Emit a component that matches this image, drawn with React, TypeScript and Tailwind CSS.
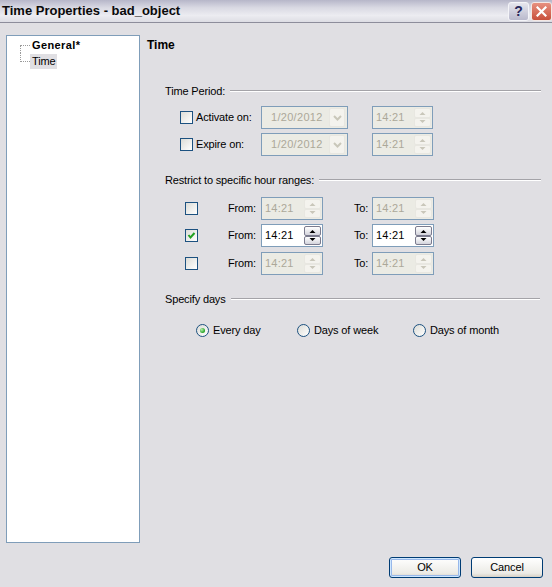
import React from "react";

function Checkbox({ checked }: { checked?: boolean }) {
  return (
    <span className="w-[13px] h-[13px] border border-[#1c5180] bg-[linear-gradient(135deg,#dcdcd7,#ffffff)] flex items-center justify-center shrink-0">
      {checked && (
        <svg width="11" height="11" viewBox="0 0 11 11">
          <path d="M2.5 5 L4.5 7.5 L8.5 3" stroke="#21a121" strokeWidth="2" fill="none" />
        </svg>
      )}
    </span>
  );
}

function Radio({ checked }: { checked?: boolean }) {
  return (
    <span className="w-[13px] h-[13px] rounded-full border border-[#1c5180] bg-[linear-gradient(135deg,#dcdcd7,#ffffff)] flex items-center justify-center shrink-0">
      {checked && (
        <span className="w-[5px] h-[5px] rounded-full bg-[radial-gradient(circle_at_35%_35%,#b8f0b0,#21a121_70%)]" />
      )}
    </span>
  );
}

function Arrow({ up, color }: { up?: boolean; color: string }) {
  return (
    <svg width="7" height="4" viewBox="0 0 7 4">
      {up ? <path d="M0.5 4 L3.5 1 L6.5 4 Z" fill={color} /> : <path d="M0.5 0 L3.5 3 L6.5 0 Z" fill={color} />}
    </svg>
  );
}

function SpinBtn({ up, enabled }: { up?: boolean; enabled?: boolean }) {
  return (
    <div
      className={
        enabled
          ? "flex-1 rounded-[2px] border border-[#7b7b8e] bg-[linear-gradient(to_bottom,#ffffff,#d4d4dc)] flex items-center justify-center"
          : "flex-1 rounded-[2px] border border-[#e8e7e1] bg-[#f4f3ee] flex items-center justify-center"
      }
    >
      <Arrow up={up} color={enabled ? "#000000" : "#c9c7ba"} />
    </div>
  );
}

function Spinner({ enabled, wide }: { enabled?: boolean; wide?: boolean }) {
  return (
    <div
      className={
        (wide ? "w-[62px] " : "w-[61px] ") +
        (enabled
          ? "h-[23px] border border-[#7f9db9] bg-white flex shrink-0"
          : "h-[23px] border border-[#7f9db9] bg-[#ebebe4] flex shrink-0")
      }
    >
      <span
        className={
          enabled
            ? "flex-1 pl-[3px] flex items-center text-black tracking-[0.2px]"
            : "flex-1 pl-[3px] flex items-center text-[#aca899] tracking-[0.2px]"
        }
      >
        14:21
      </span>
      <div className="w-[18px] flex flex-col py-[1px] pr-[1px]">
        <SpinBtn up enabled={enabled} />
        <SpinBtn enabled={enabled} />
      </div>
    </div>
  );
}

function DateBox() {
  return (
    <div className="w-[87px] h-[23px] border border-[#7f9db9] bg-[#ebebe4] flex items-center shrink-0">
      <span className="flex-1 pl-[9px] text-[#aca899] tracking-[0.3px]">1/20/2012</span>
      <div className="w-[16px] h-[19px] mr-[2px] rounded-[2px] border border-[#e8e7e1] bg-[#f4f3ee] flex items-center justify-center">
        <svg width="9" height="6" viewBox="0 0 9 6">
          <path d="M1 1 L4.5 4.5 L8 1" stroke="#c9c7ba" strokeWidth="2" fill="none" />
        </svg>
      </div>
    </div>
  );
}

function GroupHeader({ label }: { label: string }) {
  return (
    <div className="flex items-center h-[14px] pl-[18px]">
      <span className="whitespace-nowrap">{label}</span>
      <div className="flex-1 ml-[5px] h-[2px] border-t border-t-[#a4a3a8] border-b border-b-[#ffffff]" />
    </div>
  );
}

function PeriodRow({ label, mt }: { label: string; mt: string }) {
  return (
    <div className={mt + " flex items-center h-[23px] pl-[33px]"}>
      <Checkbox />
      <span className="ml-[3px] w-[65px] whitespace-nowrap">{label}</span>
      <DateBox />
      <div className="ml-[24px]">
        <Spinner />
      </div>
    </div>
  );
}

function RangeRow({ checked, mt }: { checked?: boolean; mt: string }) {
  return (
    <div className={mt + " flex items-center h-[23px] pl-[38px]"}>
      <Checkbox checked={checked} />
      <span className="ml-[30px] w-[33px]">From:</span>
      <Spinner enabled={checked} wide />
      <span className="ml-[31px] w-[18px]">To:</span>
      <Spinner enabled={checked} wide />
    </div>
  );
}

export default function App() {
  return (
    <div className="w-[552px] h-[587px] overflow-hidden flex flex-col bg-[#e0dfe3] font-['Liberation_Sans',Arial,sans-serif] text-[11px] text-black tracking-[-0.15px]">
      {/* Title bar */}
      <div className="h-[23px] shrink-0 flex items-center overflow-hidden border-b border-b-[#8d8d9b] bg-[linear-gradient(to_bottom,#b6b6c9_0%,#d9d9e3_35%,#ececf1_70%,#dddde4_100%)]">
        <span className="pl-[2px] text-[13px] font-bold tracking-[0px] text-[#0a0a0a] whitespace-nowrap">
          Time Properties - bad_object
        </span>
        <div className="flex-1" />
        <div className="w-[21px] h-[19px] shrink-0 rounded-[3px] border border-[#f4f4f8] bg-[linear-gradient(to_bottom,#e6e6ee,#b9b9cc)] flex items-center justify-center text-[14px] font-bold text-[#27275a] leading-none">
          ?
        </div>
        <div className="ml-[2px] w-[21px] h-[19px] shrink-0 rounded-[3px] border border-[#f4e8e4] bg-[linear-gradient(to_bottom,#e7907f,#c8503c)] flex items-center justify-center">
          <svg width="11" height="11" viewBox="0 0 11 11">
            <path d="M1.5 1.5 L9.5 9.5 M9.5 1.5 L1.5 9.5" stroke="#ffffff" strokeWidth="2.2" strokeLinecap="square" />
          </svg>
        </div>
      </div>

      {/* Main */}
      <div className="mt-[12px] h-[508px] shrink-0 flex items-start">
        {/* Tree */}
        <div className="ml-[6px] w-[134px] h-[508px] border border-[#7f9db9] bg-white pt-[1px]">
          <div className="flex items-center h-[16px] pl-[13px]">
            <div className="w-[10px] h-[8px] self-end border-l border-t border-dotted border-[#9a9a9a]" />
            <span className="ml-[2px] font-bold tracking-[0.4px]">General*</span>
          </div>
          <div className="flex items-center h-[16px] pl-[13px]">
            <div className="w-[10px] h-[9px] self-start border-l border-b border-dotted border-[#9a9a9a]" />
            <span className="h-[15px] flex items-center px-[2px] bg-[#e0dfe3]">Time</span>
          </div>
        </div>

        {/* Right content */}
        <div className="ml-[7px] w-[394px] flex flex-col">
          <div className="mt-[2px] h-[15px] flex items-center text-[12px] font-bold tracking-[0px]">Time</div>

          <div className="mt-[32px]">
            <GroupHeader label="Time Period:" />
          </div>
          <PeriodRow label="Activate on:" mt="mt-[8px]" />
          <PeriodRow label="Expire on:" mt="mt-[4px]" />

          <div className="mt-[17px]">
            <GroupHeader label="Restrict to specific hour ranges:" />
          </div>
          <RangeRow mt="mt-[10px]" />
          <RangeRow checked mt="mt-[4px]" />
          <RangeRow mt="mt-[5px]" />

          <div className="mt-[17px] pr-[1px]">
            <GroupHeader label="Specify days" />
          </div>
          <div className="mt-[17px] h-[14px] flex items-center pl-[49px]">
            <div className="w-[101px] flex items-center">
              <Radio checked />
              <span className="ml-[4px]">Every day</span>
            </div>
            <div className="w-[116px] flex items-center">
              <Radio />
              <span className="ml-[4px]">Days of week</span>
            </div>
            <div className="flex items-center">
              <Radio />
              <span className="ml-[4px]">Days of month</span>
            </div>
          </div>
        </div>
      </div>

      {/* Buttons */}
      <div className="mt-[14px] flex justify-end pr-[9px] gap-[10px]">
        <button className="w-[72px] h-[21px] rounded-[3px] border border-[#003c74] bg-[linear-gradient(to_bottom,#ffffff,#ecebe6_80%,#d6d0c5)] shadow-[inset_0_0_0_1px_#cee7ff,inset_0_0_0_2px_#98b8ea] text-[11px] text-black">
          OK
        </button>
        <button className="w-[72px] h-[21px] rounded-[3px] border border-[#003c74] bg-[linear-gradient(to_bottom,#ffffff,#ecebe6_80%,#d6d0c5)] text-[11px] text-black">
          Cancel
        </button>
      </div>
    </div>
  );
}
